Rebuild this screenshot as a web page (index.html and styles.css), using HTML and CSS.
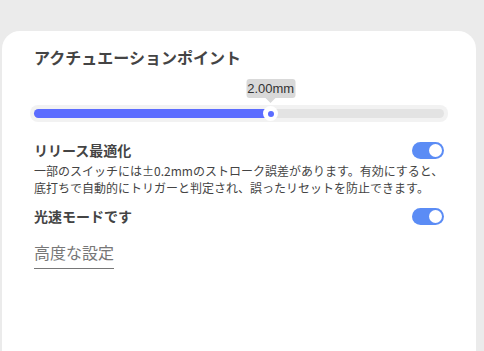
FILE: index.html
```html
<!DOCTYPE html>
<html lang="ja">
<head>
  <meta charset="UTF-8">
  <meta name="viewport" content="width=device-width, initial-scale=1.0">
  <title>アクチュエーションポイント</title>
  <link rel="stylesheet" href="styles.css">
</head>
<body>
  <div class="card">
    <h2 class="title">アクチュエーションポイント</h2>

    <div class="slider">
      <div class="track">
        <div class="fill" style="width: 57.6%;">
          <span class="thumb">
            <span class="tip">2.00mm</span>
          </span>
        </div>
      </div>
    </div>

    <div class="row">
      <span class="label">リリース最適化</span>
      <span class="switch on"></span>
    </div>
    <p class="desc">一部のスイッチには±0.2mmのストローク誤差があります。有効にすると、底打ちで自動的にトリガーと判定され、誤ったリセットを防止できます。</p>

    <div class="row">
      <span class="label">光速モードです</span>
      <span class="switch on"></span>
    </div>

    <a class="more" href="#">高度な設定</a>
  </div>
</body>
</html>
```

FILE: styles.css
```css
html, body { margin: 0; height: 100%; }
body { background: #ebebeb; font-family: "Noto Sans CJK JP", "Noto Sans", sans-serif; color: #444; padding: 31px 8px 0 2px; box-sizing: border-box; }
.card { background: #fff; border-radius: 18px 18px 0 0; min-height: 100%; padding: 14px 32px 0 32px; box-sizing: border-box; }
.title { font-size: 16px; font-weight: bold; margin: 0; line-height: 24px; }

.slider { margin: 36px -4px 0 -4px; background: #f2f2f2; border-radius: 8px; padding: 4px; }
.track { height: 9px; background: #e3e3e3; border-radius: 5px; }
.fill { height: 100%; background: #5b6cff; border-radius: 5px; position: relative; }
.thumb { position: absolute; right: -8px; top: -3px; width: 15px; height: 15px; border-radius: 50%; background: #fff; }
.thumb::after { content: ""; position: absolute; left: 4.5px; top: 4.5px; width: 6px; height: 6px; border-radius: 50%; background: #5b6cff; }
.tip { position: absolute; bottom: 23px; left: 50%; transform: translateX(-50%); background: #d9d9d9; color: #333; font-family: "Liberation Sans", Arial, sans-serif; font-size: 13px; line-height: 19px; padding: 0 1px; border-radius: 3px; white-space: nowrap; }
.tip::after { content: ""; position: absolute; left: 50%; top: 100%; margin-left: -5px; border: 5px solid transparent; border-top-color: #d9d9d9; border-bottom: 0; }

.row { display: flex; justify-content: space-between; align-items: center; margin-top: 18px; }
.label { font-size: 14px; font-weight: bold; line-height: 20px; }
.switch { width: 32px; height: 17px; border-radius: 9px; background: #5b8cf5; position: relative; }
.switch.on::after { content: ""; position: absolute; right: 2px; top: 2px; width: 13px; height: 13px; border-radius: 50%; background: #fff; }
.desc { font-size: 12px; line-height: 17px; margin: 2px 0 0 0; }
.row + .desc + .row { margin-top: 10px; }

.more { display: inline-block; margin-top: 15px; font-size: 16px; line-height: 22px; color: #777; text-decoration: none; border-bottom: 1px solid #777; padding-bottom: 5px; }
```
